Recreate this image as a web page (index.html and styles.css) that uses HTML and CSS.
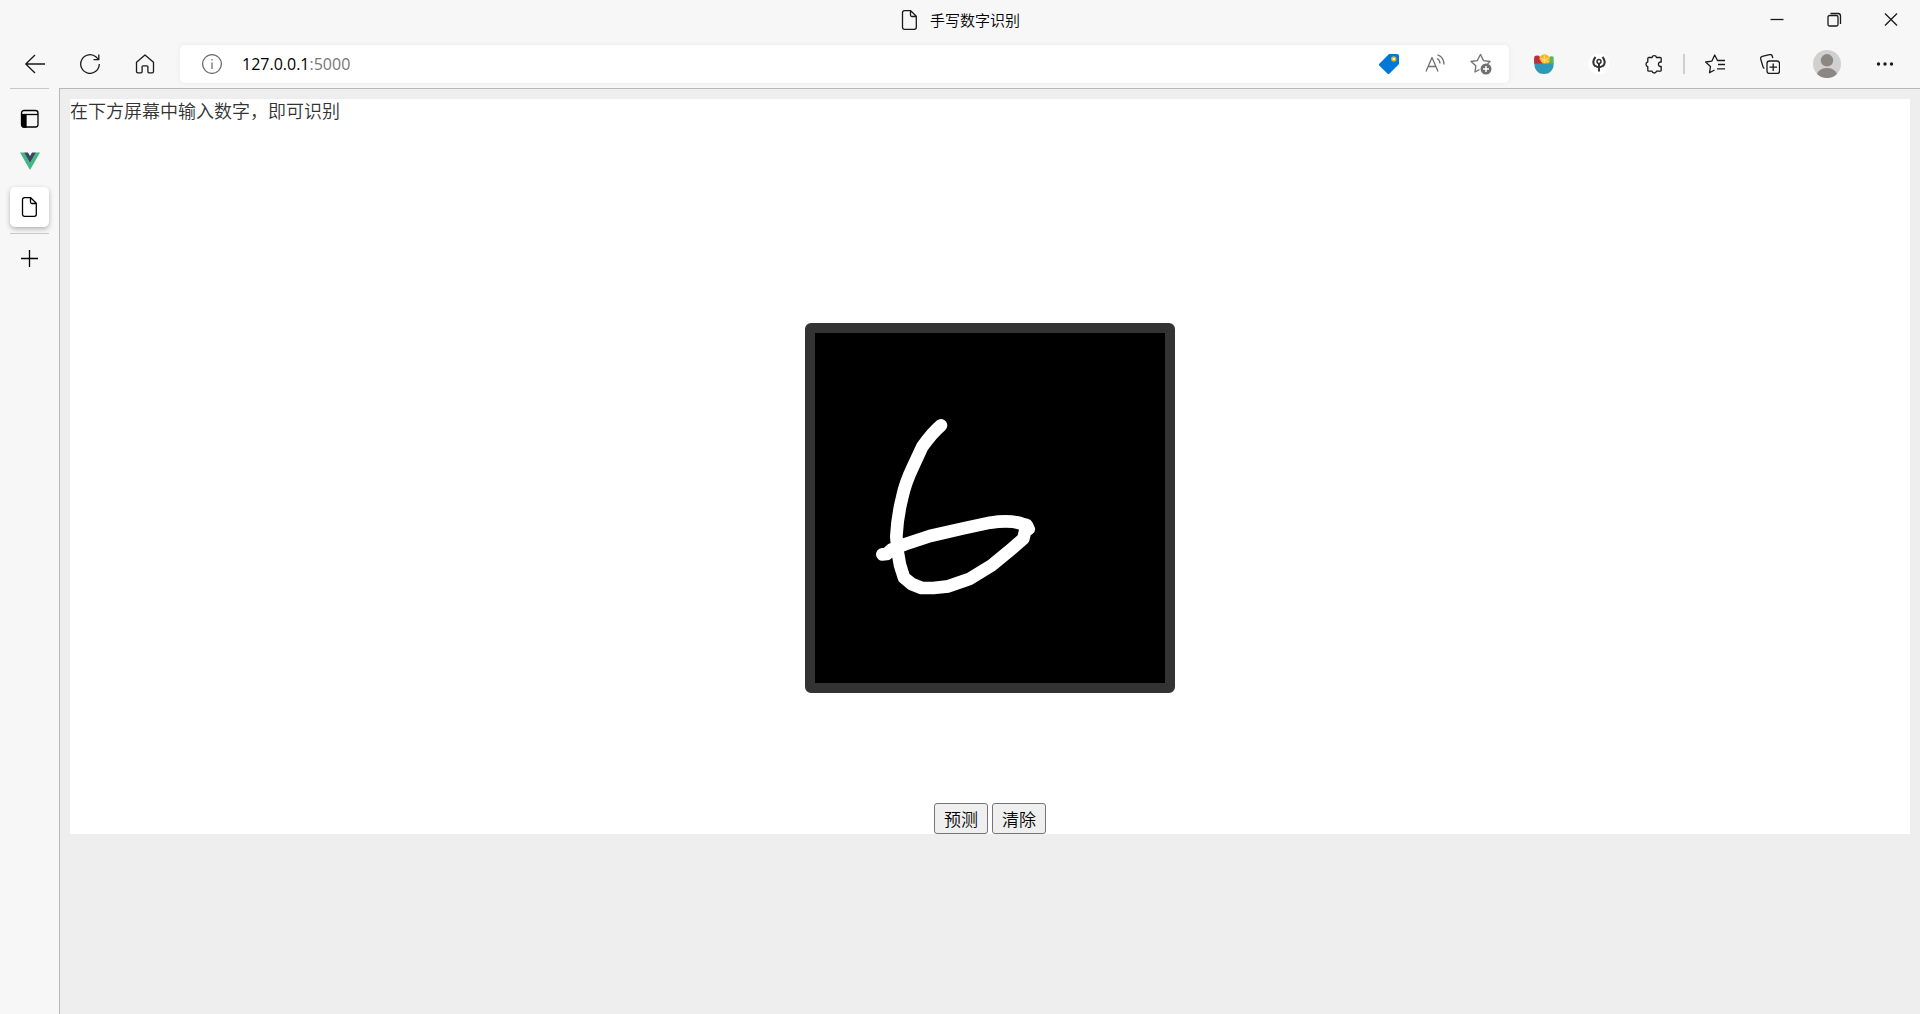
FILE: index.html
```html
<!DOCTYPE html>
<html lang="zh-CN">
<head>
<meta charset="utf-8">
<title>手写数字识别</title>
<link rel="stylesheet" href="styles.css">
</head>
<body>
<div class="browser">
  <header class="titlebar">
    <div class="window-title">
      <svg class="icon" viewBox="0 0 20 20"><path d="M4.500 .7h6.200l5.600 5.600v11a2 2 0 0 1-2 2H4.500a2 2 0 0 1-2-2V2.700a2 2 0 0 1 2-2z M10.500 1v4a1.500 1.500 0 0 0 1.500 1.500h4"/></svg>
      <span>手写数字识别</span>
    </div>
    <div class="window-controls">
      <button aria-label="最小化"><svg class="icon" viewBox="0 0 20 20"><path d="M3.500 9.500h13"/></svg></button>
      <button aria-label="还原"><svg class="icon" viewBox="0 0 20 20"><rect x="4" y="5.500" width="10" height="10.500" rx="1.500"/><path d="M6.500 3.500h7.500a2.500 2.500 0 0 1 2.500 2.500v8"/></svg></button>
      <button aria-label="关闭"><svg class="icon" viewBox="0 0 20 20"><path d="M4 3.500l12 12M16 3.500l-12 12"/></svg></button>
    </div>
  </header>

  <nav class="toolbar">
    <button class="tool" aria-label="返回"><svg class="icon" viewBox="0 0 20 20"><path d="M20 10H.8M10 1L.8 10l9.200 9"/></svg></button>
    <button class="tool" aria-label="刷新"><svg class="icon" viewBox="0 0 20 20"><path d="M19.300 10A9.300 9.300 0 1 1 16.200 3.100L18.800 5.600M18.800 .5v5.200h-5.300"/></svg></button>
    <button class="tool" aria-label="主页"><svg class="icon" viewBox="0 0 20 20"><path d="M1.500 8.200L10 .9l8.500 7.300v9.300a1.300 1.300 0 0 1-1.300 1.300h-3.300a1 1 0 0 1-1-1v-5a1 1 0 0 0-1-1H8.100a1 1 0 0 0-1 1v5a1 1 0 0 1-1 1H2.800a1.300 1.300 0 0 1-1.300-1.300z"/></svg></button>

    <div class="address">
      <button class="site-info" aria-label="查看站点信息"><svg class="icon grey" viewBox="0 0 20 20"><circle cx="10" cy="10" r="9.400"/><path d="M10 8.500v6.500M10 5v1.500"/></svg></button>
      <a class="url" href="http://127.0.0.1:5000">127.0.0.1<span class="port">:5000</span></a>
      <button class="address-tool" aria-label="购物"><svg class="icon filled" viewBox="0 0 20 20"><path fill="#0078d7" d="M10 0h8a2 2 0 0 1 2 2v8L10.500 19.500a1.500 1.500 0 0 1-2.200 0L.5 11.700a1.500 1.500 0 0 1 0-2.200z"/><circle cx="14.800" cy="5" r="2" fill="#fff" stroke="#e8b200" stroke-width="1.500"/></svg></button>
      <button class="address-tool" aria-label="大声朗读"><svg class="icon grey" viewBox="0 0 20 20"><path d="M1 17.500L7 3.500l6 14M3.300 12.500h7.400M12 4.500q3 1.500 3 5M12.500 .8q6.500 2.200 6.500 9.700"/></svg></button>
      <button class="address-tool" aria-label="添加到收藏夹"><svg class="icon grey large" viewBox="0 0 22 22"><path d="M9.500 16.500L5 19l.8-6.200L1 8.500l6.200-.9L10.500 1.500l3 6.100 6.500 .9-2.500 2.500"/><circle cx="16" cy="16" r="5.500" fill="#707070" stroke="none"/><path stroke="#fff" stroke-width="1.500" d="M13 16h6M16 13v6"/></svg></button>
    </div>

    <button class="tool" aria-label="沙拉查词"><svg class="icon filled" viewBox="0 0 20 20"><path fill="#bb2e3e" d="M.3 10V2.500Q2 .8 5 1.800l6 8.200z"/><path fill="#55b957" d="M11 10l5-7.500q3-1 3.700 1v6.500z"/><circle cx="10.500" cy="5.500" r="5.300" fill="#ffb31c"/><path stroke="#ffdd72" d="M10.500 1.500v8M6.500 4l8 4M14.500 4l-8 4"/><path fill="#bb2e3e" d="M.3 10V4l4-.5 4.500 6.500z"/><path fill="#2e98b8" d="M.3 9.500h19.400q0 6.500-5 9.700-4.700 1.500-9.400 0-5-3.200-5-9.700z"/></svg></button>
    <button class="tool" aria-label="播客扩展"><svg class="icon large filled" viewBox="0 0 22 22"><circle cx="11" cy="11" r="10.500" fill="#fff"/><path fill="none" stroke="#333" stroke-width="2" d="M7.500 4q-4.500 5.500 0 9.500M14.500 4q4.500 5.500 0 9.500"/><circle cx="11" cy="8.500" r="2" fill="none" stroke="#333" stroke-width="1.500"/><path fill="none" stroke="#333" stroke-width="2" d="M11 10.500v8M7.500 13q3.500 2.500 7 0"/></svg></button>
    <button class="tool" aria-label="扩展"><svg class="icon" viewBox="0 0 20 20"><path d="M4.500 3.500H8a2.300 2.300 0 0 1 4.500 0h3.700a1 1 0 0 1 1 1V8h-1a2.300 2.300 0 0 0 0 4.500h1v3.700a1 1 0 0 1-1 1h-3.700a2.300 2.300 0 0 1-4.500 0H4.800a1 1 0 0 1-1-1v-3.600a2.500 2.500 0 0 1 0-4.800V4.500a1 1 0 0 1 .7-1z"/></svg></button>
    <span class="divider"></span>
    <button class="tool" aria-label="收藏夹"><svg class="icon" viewBox="0 0 20 20"><path d="M9.500 16L4.500 18.800l1-6.300L.6 8l6.300-.9L9.700 1l2.800 5.500H20M13 10.500h7M12 14.800h8"/></svg></button>
    <button class="tool" aria-label="集锦"><svg class="icon" viewBox="0 0 20 20"><rect x="7" y="7" width="12.500" height="12.500" rx="2.500"/><path d="M13.200 9.500v7.500M9.500 13.200H17M4.500 14.500a2.500 2.500 0 0 1-1.500-1.700L.7 5A2.300 2.300 0 0 1 2.300 2.300L9.500 .6a2.300 2.300 0 0 1 2.800 1.600l.5 2"/></svg></button>
    <button class="tool profile" aria-label="个人资料"><svg class="avatar" viewBox="0 0 28 28"><circle cx="14" cy="14" r="14" fill="#d2d0ce"/><circle cx="14" cy="10.300" r="6.200" fill="#8a8785"/><path fill="#8a8785" d="M4 23.700Q7 18 14 18t10 5.700Q20 28 14 28T4 23.700z"/></svg></button>
    <button class="tool" aria-label="设置及其他"><svg class="icon filled" viewBox="0 0 20 20"><circle cx="3.500" cy="10" r="1.700"/><circle cx="10" cy="10" r="1.700"/><circle cx="16.500" cy="10" r="1.700"/></svg></button>
  </nav>

  <div class="workspace">
    <aside class="tabs">
      <button class="tab menu" aria-label="标签操作菜单"><svg class="icon" viewBox="0 0 20 20"><rect x="1.500" y="1.500" width="16.500" height="16.500" rx="2.500"/><path d="M1.500 5.500H18"/><path fill="#000" d="M2 6h4v12H3.500Q2 18 2 16z"/></svg></button>
      <button class="tab compact" aria-label="Vue"><svg class="icon filled" viewBox="0 0 20 20"><path fill="#41b883" d="M0 1.500h4L10 12l6-10.500h4L10 19z"/><path fill="#35495e" d="M4 1.500h4l2 3.500 2-3.500h4L10 12z"/></svg></button>
      <button class="tab active" aria-label="手写数字识别"><svg class="icon" viewBox="0 0 20 20"><path d="M4.500 .7h6.200l5.600 5.600v11a2 2 0 0 1-2 2H4.500a2 2 0 0 1-2-2V2.700a2 2 0 0 1 2-2z M10.500 1v4a1.500 1.500 0 0 0 1.500 1.500h4"/></svg></button>
      <button class="tab new-tab" aria-label="新建标签页"><svg class="icon" viewBox="0 0 20 20"><path d="M1 9.500h17M9.500 1v17"/></svg></button>
    </aside>

    <main class="viewport">
      <section class="page">
        <p class="hint">在下方屏幕中输入数字，即可识别</p>
        <svg class="board" viewBox="0 0 350 350" role="img" aria-label="手写板">
          <path transform="translate(-25 -23) scale(.33333)" d="M453 346Q425 370 397 410L370 468Q345 520 336 565Q322 620 319 680L323 725 330 765 342 803 365 822 395 834 430 834 475 829 540 806 605 766 655 725 700 686 705 665 716 657 710 645 700 643Q665 628 600 638L520 655 420 678 345 703 305 718 290 732 277 733"/>
        </svg>
        <div class="actions">
          <button class="action">预测</button>
          <button class="action">清除</button>
        </div>
      </section>
    </main>
  </div>
</div>
</body>
</html>
```
FILE: styles.css
```css
* {
  box-sizing: border-box;
}

body {
  margin: 0;
  background: #f7f7f7;
  color: #000;
  font-family: "Open Sans", "Noto Sans CJK SC", sans-serif;
}

button {
  margin: 0;
  padding: 0;
  border: 0;
  background: none;
  color: inherit;
  font-family: inherit;
}

.browser {
  display: flex;
  flex-direction: column;
  min-height: 100vh;
}

.icon {
  display: block;
  width: 20px;
  height: 20px;
  fill: none;
  stroke: #1a1a1a;
  stroke-width: 1.3;
  stroke-linejoin: round;
}

.icon.large {
  width: 22px;
  height: 22px;
}

.icon.grey {
  stroke: #707070;
}

.icon.filled {
  fill: #1a1a1a;
  stroke: none;
}

/* Title bar */
.titlebar {
  display: grid;
  grid-template-columns: 1fr auto 1fr;
  height: 40px;
}

.window-title {
  grid-column: 2;
  display: flex;
  align-items: center;
  gap: 10px;
  font-family: "Noto Sans CJK SC", sans-serif;
  font-size: 15px;
  font-weight: 350;
  line-height: 20px;
}

.window-controls {
  display: flex;
  justify-content: flex-end;
  padding-right: 1px;
}

.window-controls button {
  display: grid;
  place-items: center;
  width: 57px;
}

/* Toolbar */
.toolbar {
  display: flex;
  align-items: center;
  height: 48px;
  padding: 0 8px 0 7px;
}

.tool {
  display: grid;
  flex: none;
  place-items: center;
  width: 55px;
  height: 38px;
}

.profile {
  width: 60px;
}

.avatar {
  width: 28px;
  height: 28px;
}

.divider {
  width: 2px;
  height: 20px;
  margin: 0 2px;
  background: #cfcfcf;
}

.address {
  display: flex;
  flex: 1;
  align-items: center;
  height: 38px;
  margin: 0 7px 0 8px;
  padding: 0 5px 0 22px;
  border-radius: 5px;
  background: #fff;
  box-shadow: 0 0 6px rgba(0, 0, 0, 0.06);
}

.url {
  flex: 1;
  margin-left: 20px;
  color: #000;
  font-size: 16px;
  line-height: 24px;
  text-decoration: none;
}

.port {
  color: #767676;
}

.address-tool {
  display: grid;
  place-items: center;
  width: 46px;
  height: 38px;
}

/* Vertical tabs and page */
.workspace {
  display: flex;
  flex: 1;
}

.tabs {
  display: flex;
  flex: none;
  flex-direction: column;
  width: 59px;
  padding: 0 10px;
}

.tab {
  display: grid;
  place-items: center;
  height: 40px;
}

.tab.menu {
  height: 60px;
  border-top: 1px solid #c8c8c8;
}

.tab.compact {
  height: 26px;
  margin-bottom: 13px;
}

.tab.active {
  border-radius: 5px;
  background: #fff;
  box-shadow: 0 2px 5px rgba(0, 0, 0, 0.28);
}

.tab .icon {
  stroke: #000;
}

.tab .icon.filled {
  stroke: none;
}

.tab.new-tab {
  height: 50px;
  margin-top: 6px;
  border-top: 1px solid #c8c8c8;
}

.viewport {
  flex: 1;
  padding: 10px;
  border-top: 1px solid #b8b8b8;
  border-left: 1px solid #b8b8b8;
  background: #eee;
}

.page {
  display: flex;
  flex-direction: column;
  align-items: center;
  background: #fff;
}

.hint {
  align-self: stretch;
  margin: 0;
  color: #333;
  font-family: "Noto Sans CJK SC", sans-serif;
  font-size: 18px;
  font-weight: 350;
  line-height: 22px;
}

.board {
  box-sizing: content-box;
  width: 350px;
  height: 350px;
  margin: 202px 0 110px;
  border: 10px solid #333;
  border-radius: 6px;
  background: #000;
  fill: none;
  stroke: #fff;
  stroke-width: 38;
  stroke-linecap: round;
  stroke-linejoin: round;
}

.actions {
  display: flex;
  gap: 4px;
}

.action {
  width: 54px;
  height: 31px;
  border: 1px solid #767676;
  border-radius: 3px;
  background: #efefef;
  font-family: "Noto Sans CJK SC", sans-serif;
  font-size: 17px;
  font-weight: 350;
  line-height: 24px;
}
```
